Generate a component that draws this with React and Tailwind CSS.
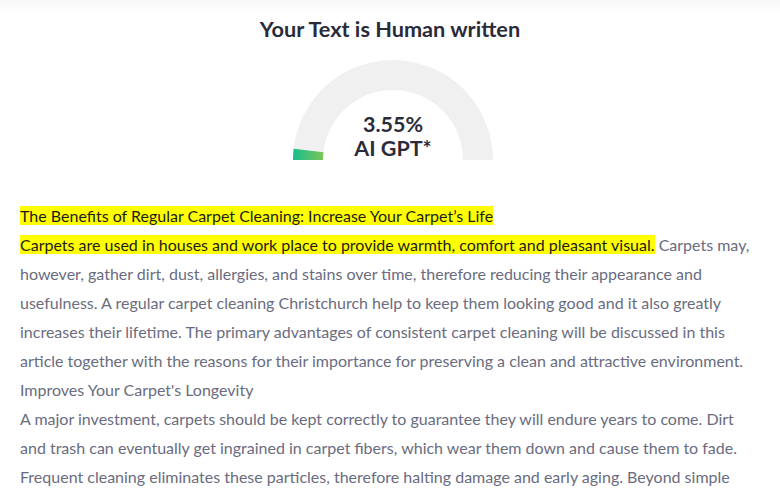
import React from 'react';

const Gauge = ({ value }) => {
  // semicircle gauge, centre (100,100), outer r 100, inner r 70
  const angle = Math.PI * (value / 100);
  const ox = 100 - 100 * Math.cos(angle);
  const oy = 100 - 100 * Math.sin(angle);
  const ix = 100 - 70 * Math.cos(angle);
  const iy = 100 - 70 * Math.sin(angle);
  return (
    <div className="relative w-[200px] h-[100px]">
      <svg width="200" height="100" viewBox="0 0 200 100" className="absolute inset-0">
        <defs>
          <linearGradient id="g" x1="0" y1="0" x2="1" y2="0">
            <stop offset="0%" stopColor="#16bd8f" />
            <stop offset="100%" stopColor="#7cc556" />
          </linearGradient>
        </defs>
        <path d="M0 100 A100 100 0 0 1 200 100 L170 100 A70 70 0 0 0 30 100 Z" fill="#f0f0f0" />
        <path d={`M0 100 A100 100 0 0 1 ${ox} ${oy} L${ix} ${iy} A70 70 0 0 0 30 100 Z`} fill="url(#g)" />
      </svg>
      <div className="absolute inset-x-0 bottom-0 flex flex-col items-center text-[21.5px] leading-[24px] font-bold text-[#2b2c3b]">
        <span>3.55%</span>
        <span>AI GPT*</span>
      </div>
    </div>
  );
};

export default function App() {
  return (
    <div className="w-[780px] h-[488px] overflow-hidden bg-white font-['Lato','Liberation_Sans',sans-serif]">
      <div className="h-[14px] bg-gradient-to-b from-[#f7f7f8] to-white" />
      <h1 className="mt-[1px] text-center text-[21.7px] leading-[28px] font-bold text-[#2a2b3a]">
        Your Text is Human written
      </h1>
      <div className="mt-[17px] flex justify-center">
        <div className="ml-[6px]">
          <Gauge value={3.55} />
        </div>
      </div>
      <div className="mt-[41px] px-[20px] text-[16px] leading-[29px] text-[#6a6c80]">
        <p>
          <span className="bg-[#ffff00] text-[#1c1c1c]">The Benefits of Regular Carpet Cleaning: Increase Your Carpet’s Life</span>
        </p>
        <p>
          <span className="bg-[#ffff00] text-[#1c1c1c]">Carpets are used in houses and work place to provide warmth, comfort and pleasant visual.</span>{' '}
          Carpets may, however, gather dirt, dust, allergies, and stains over time, therefore reducing their appearance and usefulness. A regular carpet cleaning Christchurch help to keep them looking good and it also greatly increases their lifetime. The primary advantages of consistent carpet cleaning will be discussed in this article together with the reasons for their importance for preserving a clean and attractive environment.
        </p>
        <p>Improves Your Carpet's Longevity</p>
        <p>
          A major investment, carpets should be kept correctly to guarantee they will endure years to come. Dirt and trash can eventually get ingrained in carpet fibers, which wear them down and cause them to fade. Frequent cleaning eliminates these particles, therefore halting damage and early aging. Beyond simple cleaning, professional care restores the fibers and extends their life.
        </p>
      </div>
    </div>
  );
}
